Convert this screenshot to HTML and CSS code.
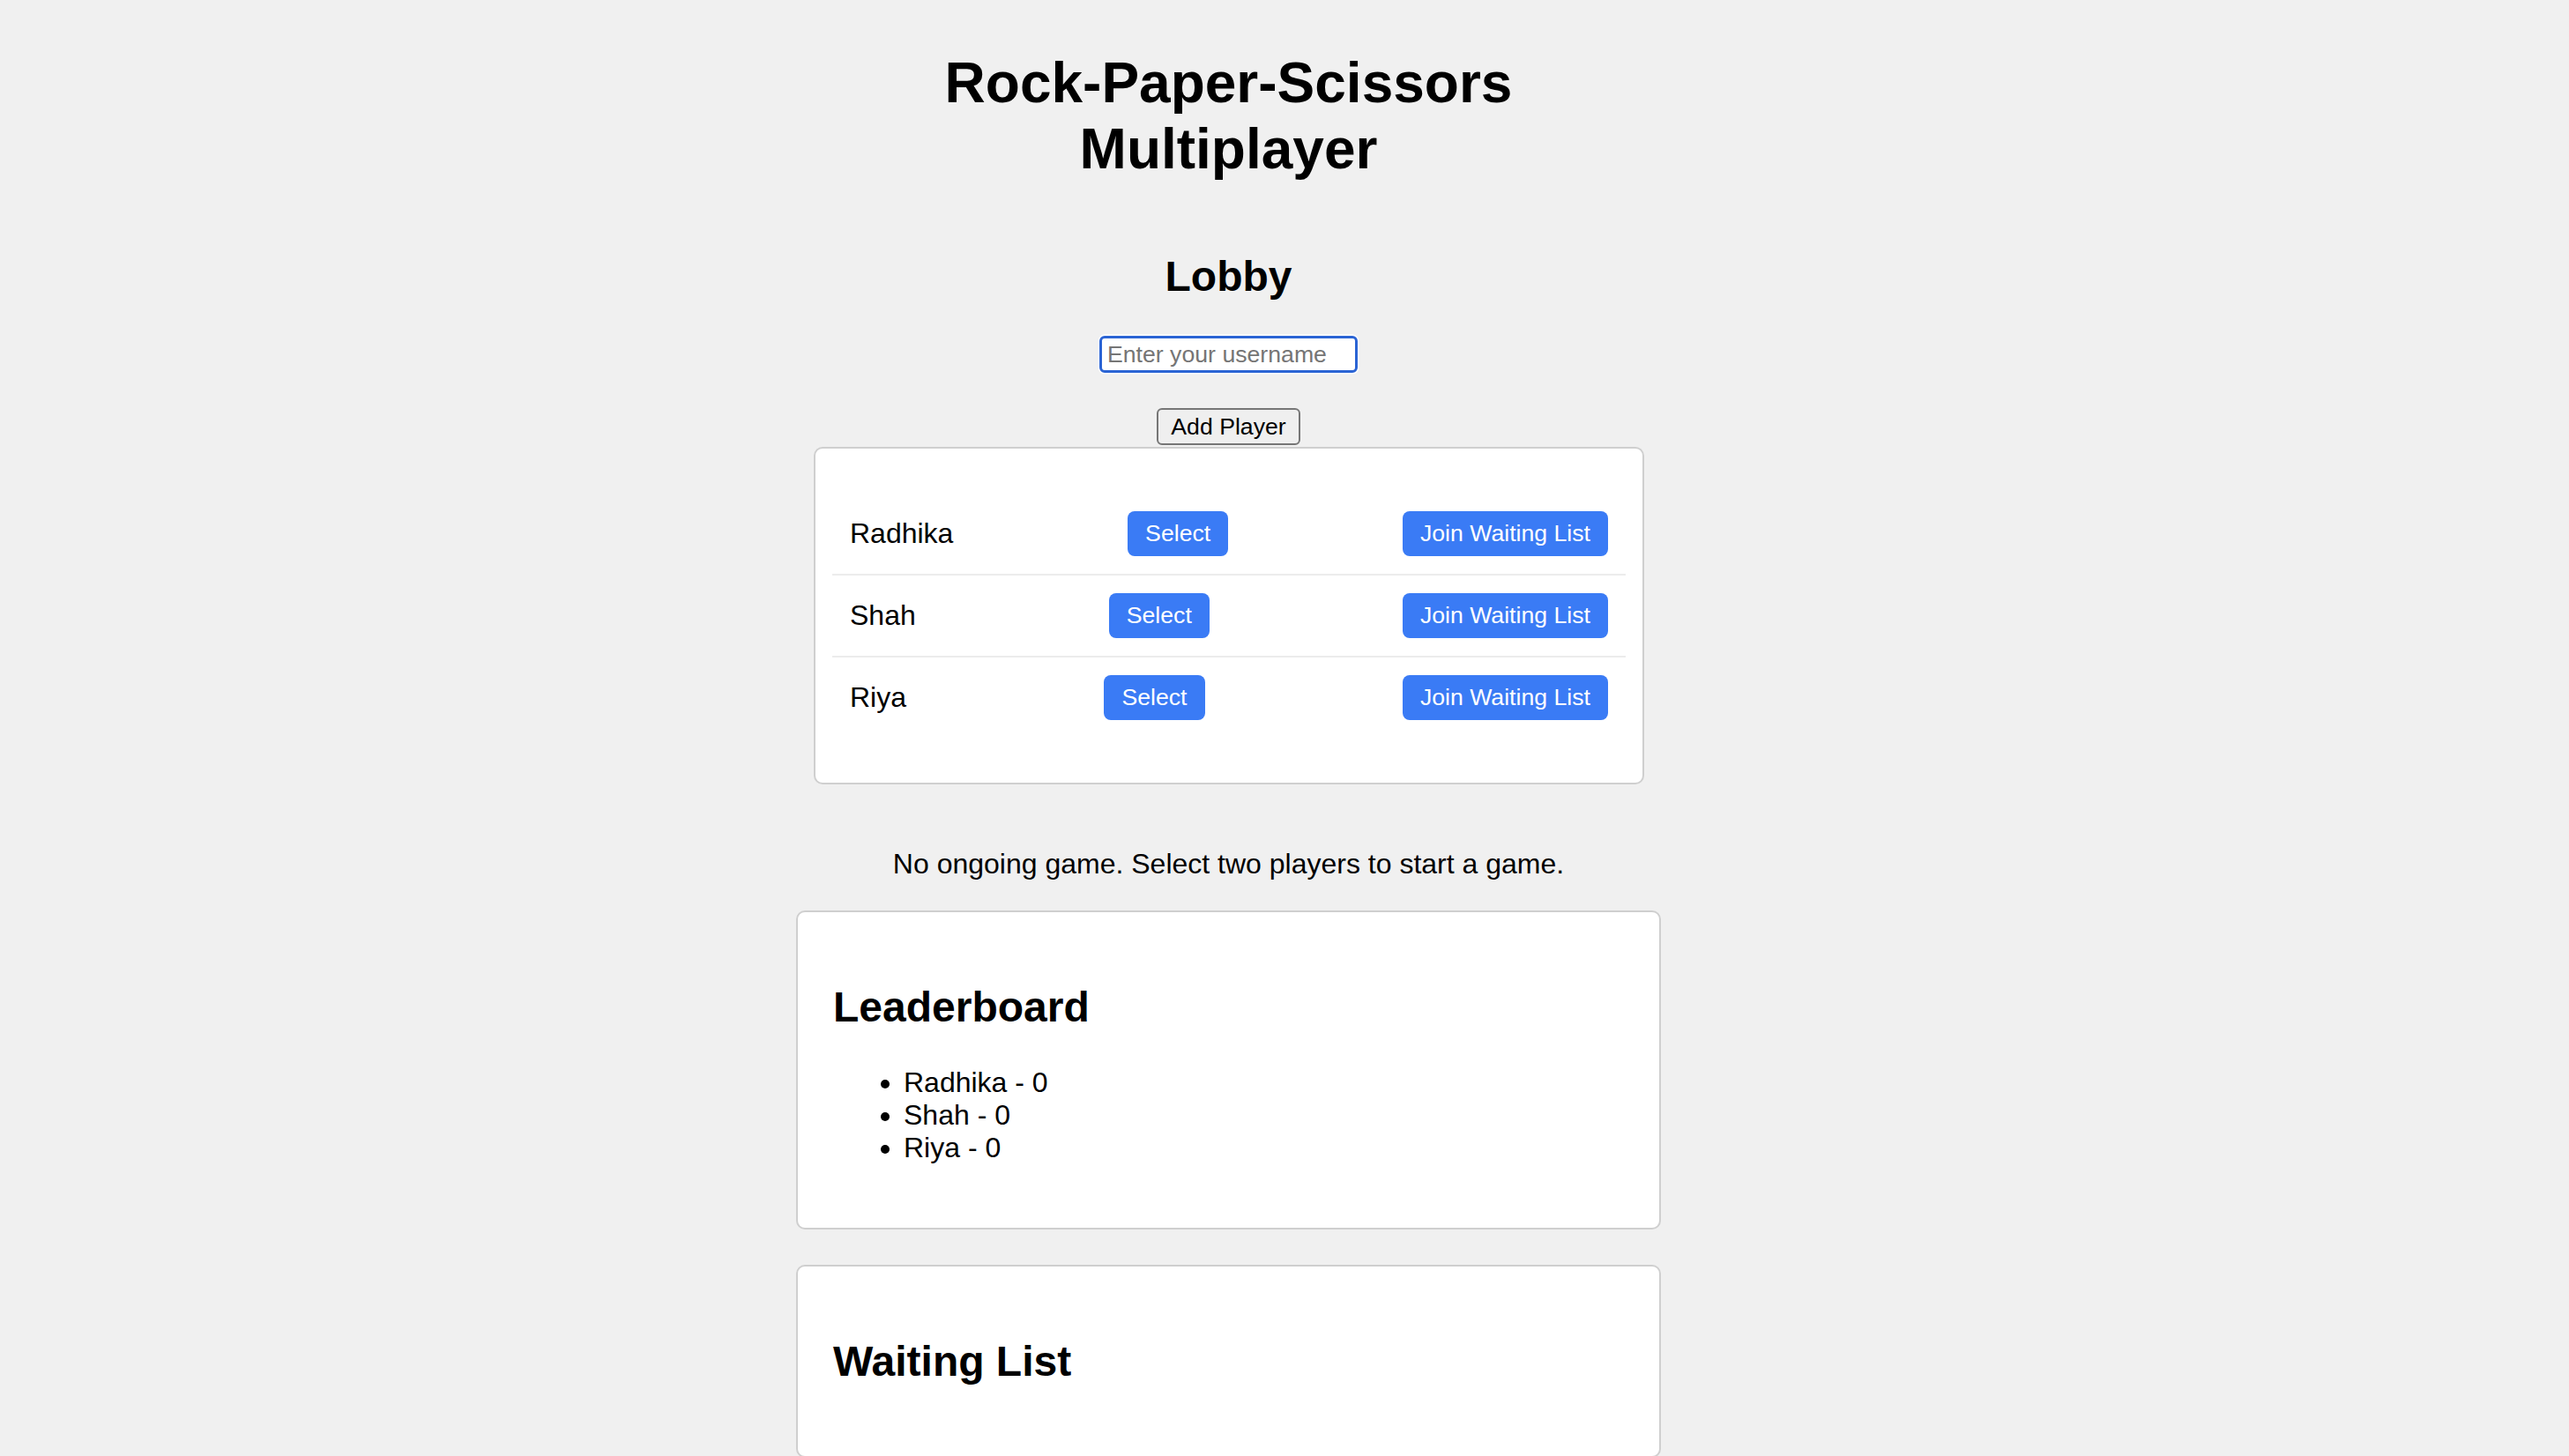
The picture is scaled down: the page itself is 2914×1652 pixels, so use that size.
FILE: index.html
```html
<!DOCTYPE html>
<html lang="en">
<head>
<meta charset="utf-8">
<title>Rock-Paper-Scissors Multiplayer</title>
<link rel="stylesheet" href="styles.css">
</head>
<body>
<div class="app">
  <h1 class="title">Rock-Paper-Scissors Multiplayer</h1>
  <h2 class="section-title">Lobby</h2>
  <input class="username" type="text" placeholder="Enter your username">
  <button class="add-btn" type="button">Add Player</button>
  <div class="lobby-box">
    <ul class="player-list">
      <li class="player-row"><span class="player-name">Radhika</span><button class="blue-btn" type="button">Select</button><button class="blue-btn" type="button">Join Waiting List</button></li>
      <li class="player-row"><span class="player-name">Shah</span><button class="blue-btn" type="button">Select</button><button class="blue-btn" type="button">Join Waiting List</button></li>
      <li class="player-row"><span class="player-name">Riya</span><button class="blue-btn" type="button">Select</button><button class="blue-btn" type="button">Join Waiting List</button></li>
    </ul>
  </div>
  <p class="status">No ongoing game. Select two players to start a game.</p>
  <div class="card">
    <h2 class="card-title">Leaderboard</h2>
    <ul class="board-list">
      <li>Radhika - 0</li>
      <li>Shah - 0</li>
      <li>Riya - 0</li>
    </ul>
  </div>
  <div class="card">
    <h2 class="card-title">Waiting List</h2>
    <ul class="board-list"></ul>
  </div>
</div>
</body>
</html>
```
FILE: styles.css
```css
html, body {
  background: #f0f0f0;
}
body {
  margin: 0;
  padding: 0 127px 0 0;
  font-family: "Liberation Sans", Arial, Helvetica, sans-serif;
  font-size: 32px;
  color: #000;
}
.app {
  width: 981px;
  margin: 0 auto;
  display: flex;
  flex-direction: column;
  text-align: center;
}
.title {
  font-size: 64px;
  line-height: 75px;
  font-weight: bold;
  margin: 57px 0 39px;
}
.section-title {
  font-size: 48px;
  font-weight: bold;
  margin: 40px 0;
}
.username {
  align-self: center;
  box-sizing: border-box;
  width: 293px;
  height: 42px;
  margin: 0 0 40px;
  padding: 0 6px;
  border: 3px solid #2b64d4;
  border-radius: 6px;
  background: #fff;
  box-shadow: 0 0 0 1.5px #fff;
  font-family: "Liberation Sans", Arial, sans-serif;
  font-size: 26.67px;
  color: #000;
  outline: none;
}
.username::placeholder {
  color: #757575;
}
.add-btn {
  align-self: center;
  box-sizing: border-box;
  height: 42px;
  margin: 0 0 2px;
  padding: 0 14px;
  border: 2px solid #767676;
  border-radius: 6px;
  background: #efefef;
  font-family: "Liberation Sans", Arial, sans-serif;
  font-size: 26.67px;
  color: #000;
}
.lobby-box {
  margin: 0 19px 40px 20px;
  padding: 19px;
  border: 2px solid #cfcfcf;
  border-radius: 10px;
  background: #fff;
  text-align: left;
}
.player-list {
  list-style: none;
  margin: 32px 0;
  padding: 0;
}
.player-row {
  display: flex;
  justify-content: space-between;
  align-items: center;
  padding: 20px;
  border-bottom: 2px solid #ececec;
}
.player-row:last-child {
  border-bottom: none;
}
.blue-btn {
  padding: 10px 20px;
  border: none;
  border-radius: 8px;
  background: #3a7bf5;
  color: #fff;
  font-family: "Liberation Sans", Arial, sans-serif;
  font-size: 26.67px;
  line-height: normal;
}
.status {
  margin: 32px 0 34px;
}
.card {
  margin: 0 0 40px;
  padding: 40px;
  border: 2px solid #cfcfcf;
  border-radius: 10px;
  background: #fff;
  text-align: left;
}
.card-title {
  font-size: 48px;
  font-weight: bold;
  margin: 40px 0;
}
.board-list {
  margin: 32px 0;
  padding-left: 80px;
}
```
